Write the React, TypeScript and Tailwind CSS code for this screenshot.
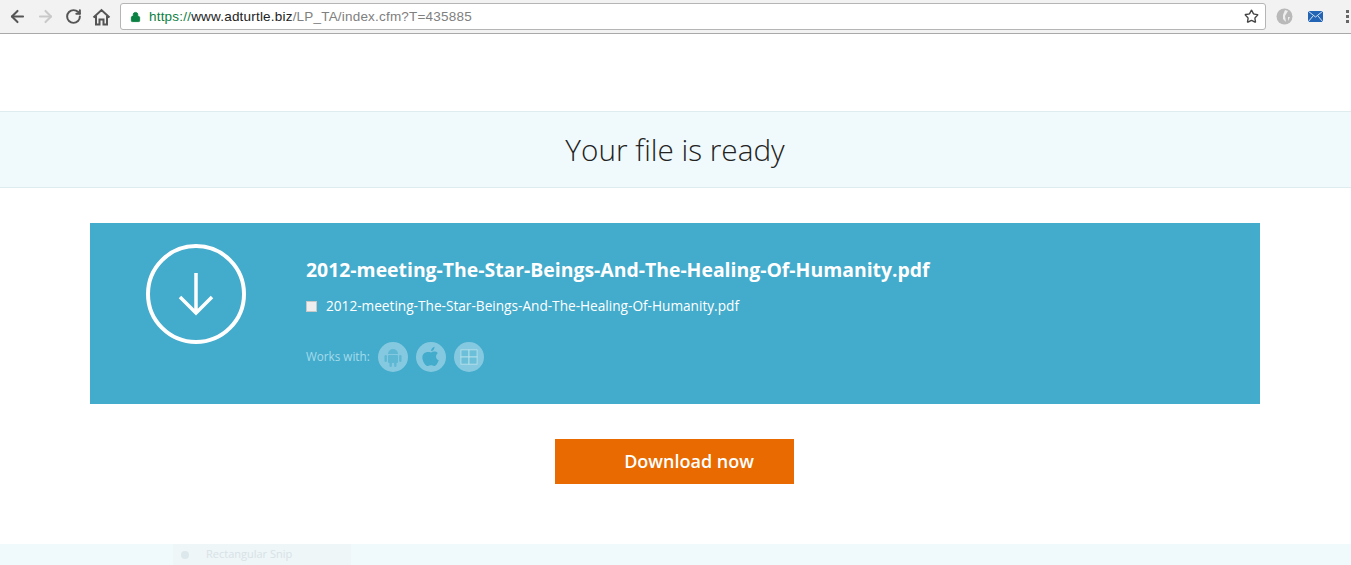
import { ArrowLeft, ArrowRight, RotateCw, Star, Lock } from 'lucide-react';

const FONT = "font-['Open_Sans','Noto_Sans',sans-serif]";

function AndroidBadge() {
  return (
    <span className="w-[30px] h-[30px] rounded-full bg-[#85c9e0] flex items-center justify-center">
      <svg width="20" height="22" viewBox="0 0 20 22" fill="#5fb8d3">
        <path d="M5 8a5 5 0 0 1 10 0z" />
        <rect x="5" y="9" width="10" height="8" rx="1" />
        <rect x="1.5" y="9" width="2.4" height="7" rx="1.2" />
        <rect x="16.1" y="9" width="2.4" height="7" rx="1.2" />
        <rect x="6.5" y="16" width="2.4" height="5" rx="1.2" />
        <rect x="11.1" y="16" width="2.4" height="5" rx="1.2" />
      </svg>
    </span>
  );
}

function AppleBadge() {
  return (
    <span className="w-[30px] h-[30px] rounded-full bg-[#85c9e0] flex items-center justify-center">
      <svg width="20" height="24" viewBox="0 0 22 24" fill="#43abcb">
        <path d="M11 7c2-1.400 5-1.800 7.500.5-3 2.500-2.500 6.500 1 8-1 2.700-3 6.500-5 6.500-1.500 0-2-.8-3.500-.8s-2 .8-3.500.8C5 22 1.500 17 1.500 12.500 1.500 8 5.500 5.500 11 7z" />
        <path d="M11 5.500c0-2.500 1.800-4.500 4-4.800 0 2.500-1.600 4.500-4 4.800z" />
      </svg>
    </span>
  );
}

function WindowsBadge() {
  return (
    <span className="w-[30px] h-[30px] rounded-full bg-[#85c9e0] flex items-center justify-center">
      <svg width="18" height="18" viewBox="0 0 20 20" fill="#6cbfd8" stroke="#b4e0ec" strokeWidth="1">
        <rect x="1" y="2" width="9" height="8" />
        <rect x="10" y="2" width="9" height="8" />
        <rect x="1" y="10" width="9" height="8" />
        <rect x="10" y="10" width="9" height="8" />
      </svg>
    </span>
  );
}

export default function App() {
  return (
    <div className={`h-[565px] w-[1351px] overflow-hidden bg-white flex flex-col ${FONT}`}>
      {/* Browser toolbar */}
      <div className="h-[34px] shrink-0 bg-[#f2f2f2] border-b border-[#a9a9a9] flex items-center pl-[8px]">
        <ArrowLeft className="w-[19px] h-[19px] text-[#555]" strokeWidth={2.6} />
        <ArrowRight className="w-[19px] h-[19px] ml-[9px] text-[#c9c9c9]" strokeWidth={2.6} />
        <RotateCw className="w-[17px] h-[17px] ml-[10px] text-[#555]" strokeWidth={2.8} />
        <svg className="ml-[10px]" width="19" height="18" viewBox="0 0 19 18" fill="none" stroke="#555" strokeWidth="2">
          <path d="M1.500 9.500 9.500 2l8 7.500M4 8v8.500h3.500v-5h4v5H15V8" />
        </svg>
        <div className="ml-[9px] w-[1146px] h-[27px] bg-white border border-[#b5b5b5] rounded-[3px] flex items-center pl-[9px] pr-[6px]">
          <Lock className="w-[11px] h-[12px] text-[#0b8043] fill-[#0b8043]" strokeWidth={2} />
          <span className="ml-[8px] pt-[1px] text-[13.5px] font-['Liberation_Sans',sans-serif] tracking-[0.2px] text-[#808080]">
            <span className="text-[#0b8043]">https://</span>
            <span className="text-[#222]">www.adturtle.biz</span>
            /LP_TA/index.cfm?T=435885
          </span>
          <Star className="w-[15px] h-[15px] ml-auto text-[#444]" strokeWidth={2.2} />
        </div>
        <svg className="ml-[10px]" width="17" height="17" viewBox="0 0 17 17">
          <circle cx="8.500" cy="8.500" r="8" fill="#b9b9b9" />
          <path d="M9 2l3 1-3 5 1 6-3-3 0-4zM12 9l2 0-2 4z" fill="#eeeeee" />
        </svg>
        <svg className="ml-[15px]" width="15" height="11" viewBox="0 0 15 11">
          <rect width="15" height="11" fill="#2464b4" />
          <path d="M0 0l7.500 6L15 0M0 11l5-6M15 11l-5-6" stroke="#cfe0f2" strokeWidth="1" fill="none" />
        </svg>
        <span className="ml-[23px] flex flex-col gap-[2px]">
          <span className="w-[3px] h-[3px] bg-[#666]" />
          <span className="w-[3px] h-[3px] bg-[#666]" />
          <span className="w-[3px] h-[3px] bg-[#666]" />
        </span>
      </div>

      {/* Heading band */}
      <div className="mt-[77px] h-[77px] shrink-0 bg-[#f0f9fb] border-y border-[#dfecef] flex items-center justify-center pr-[1px]">
        <h1 className="text-[29.7px] leading-[40px] font-light text-[#222]">Your file is ready</h1>
      </div>

      {/* File card */}
      <div className="mt-[35px] mx-[90px] w-[1170px] h-[181px] shrink-0 bg-[#43abcb] flex text-white">
        <div className="ml-[56px] mt-[21px] w-[100px] h-[100px] rounded-full border-[4px] border-white flex items-center justify-center">
          <svg width="38" height="46" viewBox="0 0 38 46" fill="none" stroke="white" strokeWidth="3.500">
            <path d="M19 2v40M3 26l16 16 16-16" />
          </svg>
        </div>
        <div className="ml-[60px] flex flex-col">
          <div className="mt-[33px] text-[19.4px] leading-[28px] font-bold">
            2012-meeting-The-Star-Beings-And-The-Healing-Of-Humanity.pdf
          </div>
          <div className="mt-[12px] flex items-center">
            <span className="w-[11px] h-[11px] bg-[#eeeeee] border border-[#c8c8c8]" />
            <span className="ml-[9px] text-[13.65px] leading-[20px]">
              2012-meeting-The-Star-Beings-And-The-Healing-Of-Humanity.pdf
            </span>
          </div>
          <div className="mt-[26px] flex items-center">
            <span className="text-[11.7px] text-[#a5dcec]">Works with:</span>
            <span className="ml-[8px] flex gap-[8px]">
              <AndroidBadge />
              <AppleBadge />
              <WindowsBadge />
            </span>
          </div>
        </div>
      </div>

      {/* Download button */}
      <div className="mt-[35px] ml-[555px] w-[239px] h-[45px] shrink-0 bg-[#e86a00] flex items-center justify-center pl-[29px] text-white text-[18px] font-semibold">
        Download now
      </div>

      {/* Faint footer band */}
      <div className="mt-[60px] h-[21px] shrink-0 bg-[#f0f9fb] pl-[173px] flex items-center">
        <div className="w-[178px] h-[21px] flex items-center pl-[8px] bg-[#eef6f8]">
          <span className="w-[8px] h-[8px] rounded-full bg-[#dde8ec]" />
          <span className="ml-[17px] text-[11px] text-[#d8e2e6]">Rectangular Snip</span>
        </div>
      </div>
    </div>
  );
}
